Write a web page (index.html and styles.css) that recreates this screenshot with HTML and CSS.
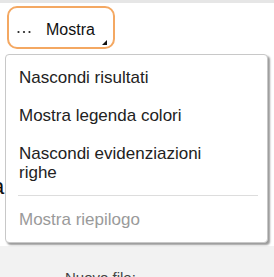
FILE: index.html
```html
<!DOCTYPE html>
<html lang="it">
<head>
    <meta charset="UTF-8">
    <title>Mostra</title>
    <link rel="stylesheet" href="styles.css">
</head>
<body>
    <div class="topbar"></div>

    <div class="toolbar">
        <button class="show-btn">
            <svg class="dots" width="16" height="16" viewBox="0 0 16 16">
                <circle cx="2.5" cy="10" r="1.1" fill="#222"/>
                <circle cx="8" cy="10" r="1.1" fill="#222"/>
                <circle cx="13.5" cy="10" r="1.1" fill="#222"/>
            </svg>
            <span>Mostra</span>
            <span class="corner"></span>
        </button>
    </div>

    <div class="content">
        <div class="peek">a</div>
    </div>

    <div class="footer">
        <span class="label">Nuovo file:</span>
    </div>

    <!-- dropdown menu -->
    <ul class="menu">
        <li class="menu-item">Nascondi risultati</li>
        <li class="menu-item">Mostra legenda colori</li>
        <li class="menu-item">Nascondi evidenziazioni righe</li>
        <li class="separator"></li>
        <li class="menu-item disabled">Mostra riepilogo</li>
    </ul>
</body>
</html>
```

FILE: styles.css
```css
* {
    box-sizing: border-box;
}

body {
    margin: 0;
    background-color: #fff;
    font-family: 'Liberation Sans', Arial, sans-serif;
    color: #222;
    overflow: hidden;
}

.topbar {
    height: 3px;
    background-color: #e6e6e6;
}

.toolbar {
    height: 51px;
    padding: 3px 0 0 7px;
}

.show-btn {
    position: relative;
    display: flex;
    align-items: center;
    width: 108px;
    height: 43px;
    padding: 4px 0 0 7px;
    border: 2.5px solid #f4a862;
    border-radius: 10px;
    background-color: #fff;
    font-family: inherit;
    font-size: 16px;
    color: #111;
    cursor: pointer;
}

.dots {
    margin-right: 14px;
}

.corner {
    position: absolute;
    right: 6px;
    bottom: 2px;
    width: 0;
    height: 0;
    border-left: 5px solid transparent;
    border-bottom: 5px solid #111;
}

.content {
    height: 192px;
    padding-top: 120px;
}

.peek {
    margin-left: -8px;
    font-size: 22px;
    line-height: 26px;
    color: #111;
}

.footer {
    height: 40px;
    background-color: #f2f2f2;
    padding: 23px 0 0 65px;
}

.label {
    font-size: 15px;
    line-height: 18px;
    color: #444;
}

.menu {
    position: absolute;
    left: 5px;
    top: 54px;
    width: 263px;
    margin: 0;
    padding: 3px 0 4px 0;
    list-style: none;
    background-color: #fff;
    border: 1px solid #c8c8c8;
    border-radius: 4px;
    box-shadow: 2px 2px 2px rgba(0, 0, 0, 0.4);
}

.menu-item {
    padding: 9.5px 40px 9.5px 13px;
    font-size: 17px;
    line-height: 19px;
    color: #222;
    cursor: pointer;
}

.menu-item.disabled {
    color: #9a9a9a;
    cursor: default;
}

.separator {
    height: 1px;
    margin: 4px 9px 4px 12px;
    background-color: #ddd;
}
```
